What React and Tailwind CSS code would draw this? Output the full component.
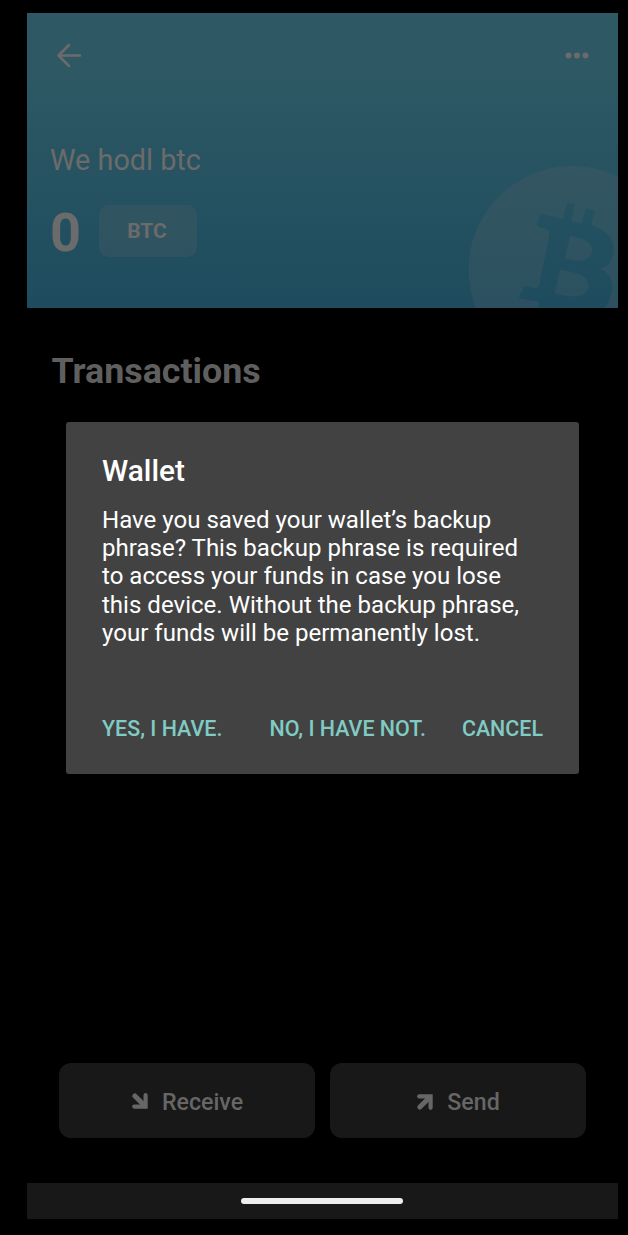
import React from "react";

function BitcoinMark() {
  return (
    <svg className="absolute right-0 bottom-0 h-[158px] w-[170px]" viewBox="0 0 510 474" aria-hidden="true">
      <defs>
        <mask id="coin">
          <circle cx="373" cy="359" r="311" fill="white" />
          <path
            fill="black"
            d="M276 190 L345 208 L358 158 L380 163 L370 213 L401 221 L414 174 L441 180 L430 226 C482 243 502 272 496 308 C491 338 478 350 457 356 C491 372 500 402 487 440 C482 458 474 468 466 476 L270 476 L274 456 L211 444 L229 407 L259 414 Q270 416 274 402 L304 258 Q307 242 294 236 L266 228 Z"
          />
          <path fill="white" d="M366 258 C405 264 437 277 432 305 C427 336 389 336 350 326 Z" />
          <path fill="white" d="M336 360 C383 365 427 380 422 412 C417 446 366 444 320 430 Z" />
        </mask>
      </defs>
      <rect width="510" height="474" fill="#666666" fillOpacity="0.2" mask="url(#coin)" />
    </svg>
  );
}

function ArrowCorner({ className }) {
  return (
    <svg className={className} viewBox="0 0 16 16" fill="none" stroke="currentColor" aria-hidden="true">
      <path d="M2.9 2.9 L12 12" strokeWidth="5" strokeLinecap="round" />
      <path d="M13.6 2.2 V13.6 H2.2" strokeWidth="4.2" strokeLinecap="round" strokeLinejoin="miter" />
    </svg>
  );
}

function ActionButton({ label, iconClass }) {
  return (
    <button className="flex h-[75px] flex-1 items-center justify-center gap-[14px] rounded-xl bg-[#181818] pl-px text-[23.2px] font-medium text-[#666666]">
      <ArrowCorner className={iconClass} />
      <span className="pt-[3px]">{label}</span>
    </button>
  );
}

function Dialog() {
  return (
    <div role="dialog" className="absolute top-[422px] left-[66px] flex h-[352px] w-[513px] flex-col rounded-[3px] bg-[#424242] px-9 pt-[31px] text-white">
      <h2 className="text-[29.8px] leading-9 font-medium">Wallet</h2>
      <p className="mt-[16.5px] text-[24.05px] leading-[28.4px] whitespace-nowrap">
        Have you saved your wallet’s backup
        <br />
        phrase? This backup phrase is required
        <br />
        to access your funds in case you lose
        <br />
        this device. Without the backup phrase,
        <br />
        your funds will be permanently lost.
      </p>
      <div className="mt-[67.5px] flex text-[21.45px] leading-7 font-medium whitespace-nowrap text-[#80cbc4]">
        <button>YES, I HAVE.</button>
        <button className="ml-auto">NO, I HAVE NOT.</button>
        <button className="ml-9">CANCEL</button>
      </div>
    </div>
  );
}

export default function App() {
  return (
    <div className="relative flex h-[1235px] w-[628px] flex-col overflow-hidden bg-black pt-[13px] pr-[10px] pl-[27px] font-[Roboto,sans-serif]">
      <header className="relative h-[295px] shrink-0 bg-linear-to-b from-[#2d5864] from-20% to-[#1e4c5e] px-[23px] pt-7 text-[#6b6b6b]">
        <BitcoinMark />
        <div className="flex h-7 items-center justify-between pr-[6px] pl-[5px]">
          <svg className="h-7 w-7" viewBox="0 0 28 28" fill="none" stroke="currentColor" strokeWidth="2.6" strokeLinecap="round" strokeLinejoin="round">
            <path d="M25 14.5 H3.5 M14 4 L3.5 14.5 L14 25" />
          </svg>
          <svg className="h-6 w-6" viewBox="0 0 24 24" fill="currentColor">
            <circle cx="3.5" cy="12.5" r="3" />
            <circle cx="12" cy="12.5" r="3" />
            <circle cx="20.5" cy="12.5" r="3" />
          </svg>
        </div>
        <div className="mt-[73px] text-[28.8px] leading-9">We hodl btc</div>
        <div className="mt-[23px] flex items-center">
          <span className="w-[49px] pt-[5px] text-[54px] leading-[54px] font-bold">0</span>
          <span className="flex h-[52px] w-[98px] items-center justify-center rounded-[10px] bg-[#666666]/20 pt-[3px] pr-[2px] text-[21px] font-bold">BTC</span>
        </div>
      </header>
      <h1 className="mt-[41px] pl-[24.5px] text-[35.8px] leading-[44px] font-bold text-[#5f5f5f]">Transactions</h1>
      <div className="mt-auto flex gap-[15px] pr-8 pl-8">
        <ActionButton label="Receive" iconClass="h-4 w-4" />
        <ActionButton label="Send" iconClass="mt-[2px] h-4 w-4 -rotate-90" />
      </div>
      <div className="mt-[45px] mb-4 flex h-9 shrink-0 items-center justify-center bg-[#181818]">
        <div className="mr-px h-1.5 w-[162px] rounded-full bg-[#eeeeee]" />
      </div>
      <Dialog />
    </div>
  );
}
